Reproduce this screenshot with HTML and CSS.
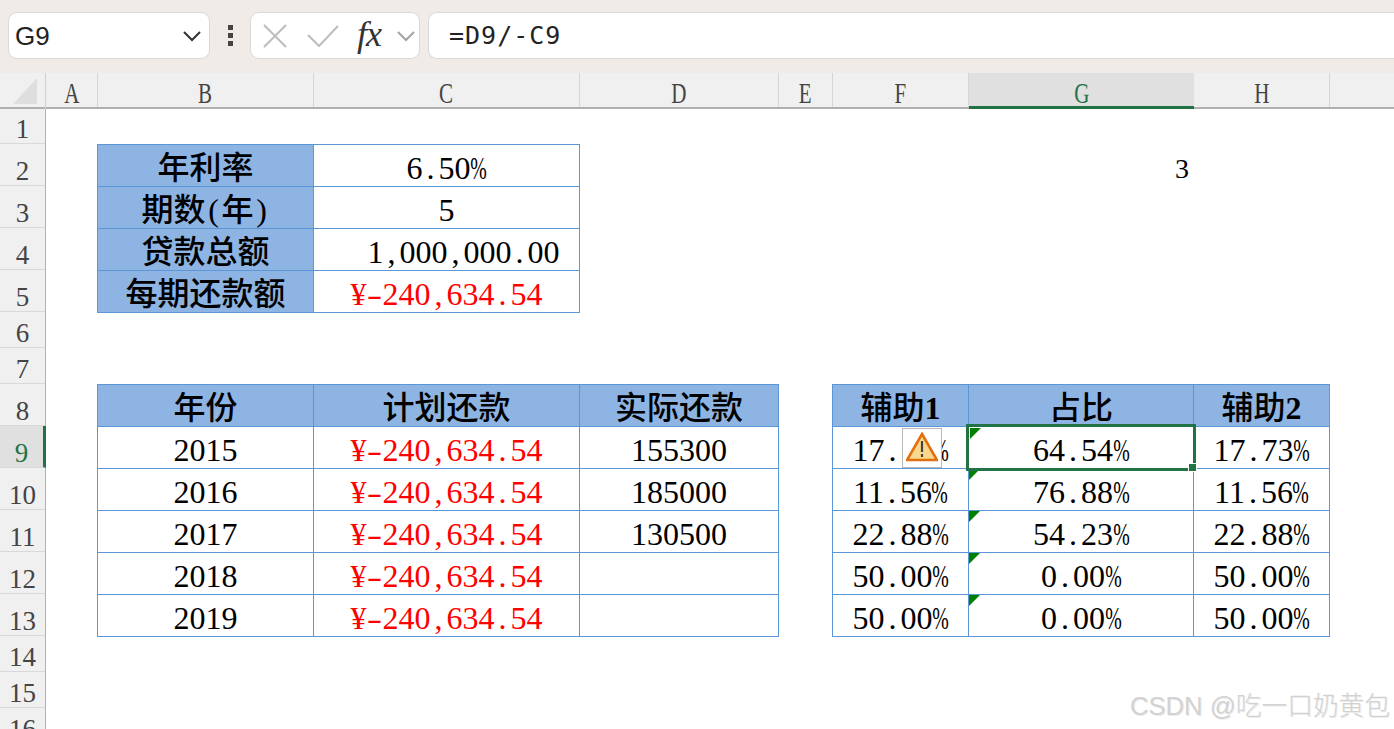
FILE: index.html
```html
<!DOCTYPE html>
<html lang="zh">
<head>
<meta charset="utf-8">
<title>还款表</title>
<link rel="stylesheet" href="styles.css">
</head>
<body>
<header class="fbar">
  <div class="namebox"><span>G9</span>
    <svg class="chev" viewBox="0 0 20 12"><path d="M2 2l8 8 8-8" fill="none" stroke="#333" stroke-width="2"/></svg>
  </div>
  <div class="dots"><b></b><b></b><b></b></div>
  <div class="fxbox">
    <svg class="ic-x" viewBox="0 0 24 24"><path d="M1 1l22 22M23 1L1 23" fill="none" stroke="#bdbdbd" stroke-width="2"/></svg>
    <svg class="ic-ok" viewBox="0 0 32 22"><path d="M1 10l11 11L31 1" fill="none" stroke="#bdbdbd" stroke-width="2"/></svg>
    <span class="fx">fx</span>
    <svg class="chev2" viewBox="0 0 20 12"><path d="M2 2l8 8 8-8" fill="none" stroke="#a3a3a3" stroke-width="2"/></svg>
  </div>
  <div class="formula">=D9/-C9</div>
</header>

<div class="colhead">
  <div class="corner"><svg viewBox="0 0 24 26"><path d="M24 0v26H0z" fill="#dedede"/></svg></div>
  <div class="ch a"><span>A</span></div>
  <div class="ch b"><span>B</span></div>
  <div class="ch c"><span>C</span></div>
  <div class="ch d"><span>D</span></div>
  <div class="ch e"><span>E</span></div>
  <div class="ch f"><span>F</span></div>
  <div class="ch g sel"><span>G</span></div>
  <div class="ch h"><span>H</span></div>
  <div class="ch i"></div>
</div>

<main class="sheet">
  <div class="rowhead">
    <div class="rh short first"><span>1</span></div>
    <div class="rh"><span>2</span></div>
    <div class="rh"><span>3</span></div>
    <div class="rh"><span>4</span></div>
    <div class="rh"><span>5</span></div>
    <div class="rh short"><span>6</span></div>
    <div class="rh short"><span>7</span></div>
    <div class="rh"><span>8</span></div>
    <div class="rh sel"><span>9</span></div>
    <div class="rh"><span>10</span></div>
    <div class="rh"><span>11</span></div>
    <div class="rh"><span>12</span></div>
    <div class="rh"><span>13</span></div>
    <div class="rh short"><span>14</span></div>
    <div class="rh short"><span>15</span></div>
    <div class="rh short"><span>16</span></div>
  </div>

  <div class="canvas">
    <section class="top">
      <div class="tbl t-info">
        <div class="cell head">年利率</div><div class="cell">6<i class="hw">.</i>50<i class="pc">%</i></div>
        <div class="cell head">期数<i class="hw">(</i>年<i class="hw">)</i></div><div class="cell">5</div>
        <div class="cell head">贷款总额</div><div class="cell acct">1<i class="hw">,</i>000<i class="hw">,</i>000<i class="hw">.</i>00</div>
        <div class="cell head">每期还款额</div><div class="cell red">¥<i class="hy">-</i>240<i class="hw">,</i>634<i class="hw">.</i>54</div>
      </div>
      <div class="lone">3</div>
    </section>

    <section class="bottom">
      <div class="tbl t-plan">
        <div class="cell head">年份</div><div class="cell head">计划还款</div><div class="cell head">实际还款</div>
        <div class="cell">2015</div><div class="cell red">¥<i class="hy">-</i>240<i class="hw">,</i>634<i class="hw">.</i>54</div><div class="cell">155300</div>
        <div class="cell">2016</div><div class="cell red">¥<i class="hy">-</i>240<i class="hw">,</i>634<i class="hw">.</i>54</div><div class="cell">185000</div>
        <div class="cell">2017</div><div class="cell red">¥<i class="hy">-</i>240<i class="hw">,</i>634<i class="hw">.</i>54</div><div class="cell">130500</div>
        <div class="cell">2018</div><div class="cell red">¥<i class="hy">-</i>240<i class="hw">,</i>634<i class="hw">.</i>54</div><div class="cell"></div>
        <div class="cell">2019</div><div class="cell red">¥<i class="hy">-</i>240<i class="hw">,</i>634<i class="hw">.</i>54</div><div class="cell"></div>
      </div>

      <div class="tbl t-help">
        <div class="cell head">辅助<b class="nb">1</b></div><div class="cell head">占比</div><div class="cell head">辅助<b class="nb">2</b></div>
        <div class="cell">17<i class="hw">.</i>73<i class="pc">%</i>
          <div class="warn"><svg viewBox="0 0 32 30"><path d="M16 2L31 28H1z" fill="#fad78c" stroke="#e0700f" stroke-width="2.6" stroke-linejoin="miter"/><path d="M16 9v11M16 22v3" stroke="#444" stroke-width="2.2"/></svg></div>
        </div>
        <div class="cell flag active">64<i class="hw">.</i>54<i class="pc">%</i><div class="handle"></div></div>
        <div class="cell">17<i class="hw">.</i>73<i class="pc">%</i></div>
        <div class="cell">11<i class="hw">.</i>56<i class="pc">%</i></div><div class="cell flag">76<i class="hw">.</i>88<i class="pc">%</i></div><div class="cell">11<i class="hw">.</i>56<i class="pc">%</i></div>
        <div class="cell">22<i class="hw">.</i>88<i class="pc">%</i></div><div class="cell flag">54<i class="hw">.</i>23<i class="pc">%</i></div><div class="cell">22<i class="hw">.</i>88<i class="pc">%</i></div>
        <div class="cell">50<i class="hw">.</i>00<i class="pc">%</i></div><div class="cell flag">0<i class="hw">.</i>00<i class="pc">%</i></div><div class="cell">50<i class="hw">.</i>00<i class="pc">%</i></div>
        <div class="cell">50<i class="hw">.</i>00<i class="pc">%</i></div><div class="cell flag">0<i class="hw">.</i>00<i class="pc">%</i></div><div class="cell">50<i class="hw">.</i>00<i class="pc">%</i></div>
      </div>
    </section>
  </div>
</main>
<div class="mark">CSDN @吃一口奶黄包</div>
</body>
</html>
```
FILE: styles.css
```css
* { box-sizing: border-box; }
html, body { margin: 0; height: 100%; overflow: hidden; background: #fff; }
body { position: relative; font-family: "Liberation Serif", "Noto Sans CJK SC", serif; color: #000; }

/* formula bar */
.fbar { height: 73px; background: #f0ebe7; display: flex; align-items: center; padding: 12px 0 14px 8px; }
.namebox, .fxbox, .formula { height: 47px; background: #fff; border: 1px solid #d9d9d9; display: flex; align-items: center; }
.namebox { width: 202px; border-radius: 9px; padding: 0 7px 0 6px; font: 26px/46px "Liberation Sans", sans-serif; color: #222; }
.namebox span { flex: 1; }
.chev { width: 20px; height: 12px; }
.dots { width: 40px; display: flex; flex-direction: column; align-items: center; gap: 3px; }
.dots b { width: 5px; height: 5px; background: #444; }
.fxbox { width: 170px; border-radius: 9px; padding-left: 12px; }
.ic-x { width: 24px; height: 24px; flex: none; }
.ic-ok { width: 32px; height: 22px; margin: 0 18px 0 20px; flex: none; }
.fx { font: italic 36px/40px "Liberation Serif", serif; color: #333; width: 28px; margin-top: -4px; letter-spacing: -1px; }
.chev2 { width: 20px; height: 12px; margin-left: 11px; }
.formula { flex: 1; margin-left: 8px; border-radius: 9px 0 0 9px; border-right: 0; padding-left: 20px; font: 25px/46px "DejaVu Sans Mono", monospace; letter-spacing: 1px; color: #222; }

/* column header */
.colhead { height: 36px; display: flex; background: #f0f0f0; border-bottom: 2px solid #b0b0b0; color: #444; font-size: 30px; }
.corner { width: 46px; border-right: 1px solid #d0d0d0; padding: 5px 0 0 13px; margin-bottom: -2px; }
.corner svg { width: 24px; height: 26px; display: block; }
.ch { display: flex; justify-content: center; align-items: flex-end; height: 34px; border-right: 1px solid #d6d6d6; line-height: 28px; }
.ch span { display: block; transform: scaleX(.7); }
.ch.a { width: 52px; }
.ch.b { width: 216px; }
.ch.c { width: 266px; }
.ch.d { width: 199px; }
.ch.e { width: 54px; }
.ch.f { width: 136px; }
.ch.g { width: 225px; }
.ch.h { width: 136px; }
.ch.i { flex: 1; border-right: 0; }
.ch.sel { background: #e0e0e0; color: #217346; height: 36px; border-bottom: 3px solid #217346; margin-bottom: -2px; border-right: 0; line-height: 27px; }

/* sheet */
.sheet { display: flex; height: 620px; overflow: hidden; }
.rowhead { width: 46px; flex: none; background: #f0f0f0; border-right: 1px solid #b0b0b0; color: #444; font-size: 27px; }
.rh { height: 42px; border-bottom: 1px solid #d9d9d9; display: flex; justify-content: center; align-items: flex-end; line-height: 26px; padding-bottom: 1px; }
.rh span { display: block; }
.rh.short { height: 36px; }
.rh.first { height: 35px; }
.rh.sel { background: #e0e0e0; color: #217346; border-right: 3px solid #217346; margin-right: -1px; }

.canvas { flex: 1; padding: 35px 0 0 51px; }
.top { display: flex; height: 240px; align-items: flex-start; }
.lone { font-size: 28px; line-height: 42px; margin: 4px 0 0 595px; width: 14px; }
.bottom { display: flex; gap: 53px; }

.tbl { display: grid; border-top: 1px solid #5b96d8; border-left: 1px solid #5b96d8; font-size: 32px; grid-auto-rows: 42px; }
.t-info { grid-template-columns: 216px 266px; }
.t-plan { grid-template-columns: 216px 266px 199px; }
.t-help { grid-template-columns: 136px 225px 136px; }
.cell { position: relative; display: flex; justify-content: center; align-items: center; white-space: pre; line-height: 40px; padding-top: 5px; border-right: 1px solid #5b96d8; border-bottom: 1px solid #5b96d8; }
.head { background: #8eb4e3; font-weight: 500; }
.nb { font-weight: 700; }
.red { color: #f00; }
.acct { padding-left: 34px; }

/* SimSun-style half-width punctuation */
.hw, .pc, .hy { font-style: normal; display: inline-block; text-align: center; }
.hw { width: 16px; }
.pc { width: 27px; margin: 0 -5.5px; transform: scaleX(.62); }
.hy { width: 11px; margin: 0 2.5px; transform: scaleX(1.45); }

/* overlays */
.flag::before { content: ""; position: absolute; left: 0; top: 0; border-top: 11px solid #008000; border-right: 11px solid transparent; }
.active::after { content: ""; position: absolute; left: -3px; top: -3px; right: -3px; bottom: -3px; border: 3px solid #217346; z-index: 2; }
.active::before { z-index: 3; left: 1px; top: 1px; }
.handle { position: absolute; right: -4px; bottom: -4px; width: 9px; height: 9px; background: #217346; border: 1px solid #fff; z-index: 3; }
.warn { position: absolute; left: 69px; top: 1px; width: 40px; height: 40px; background: #fff; border: 1px solid #b8b8b8; padding: 3px; z-index: 2; }
.warn svg { display: block; width: 32px; height: 30px; }
.mark { position: absolute; right: 4px; bottom: 7px; font: 300 25.7px/32px "Liberation Sans", "Noto Sans CJK SC", sans-serif; color: #d2d2d2; text-shadow: 1px 1px 0 #ececec; }
```
